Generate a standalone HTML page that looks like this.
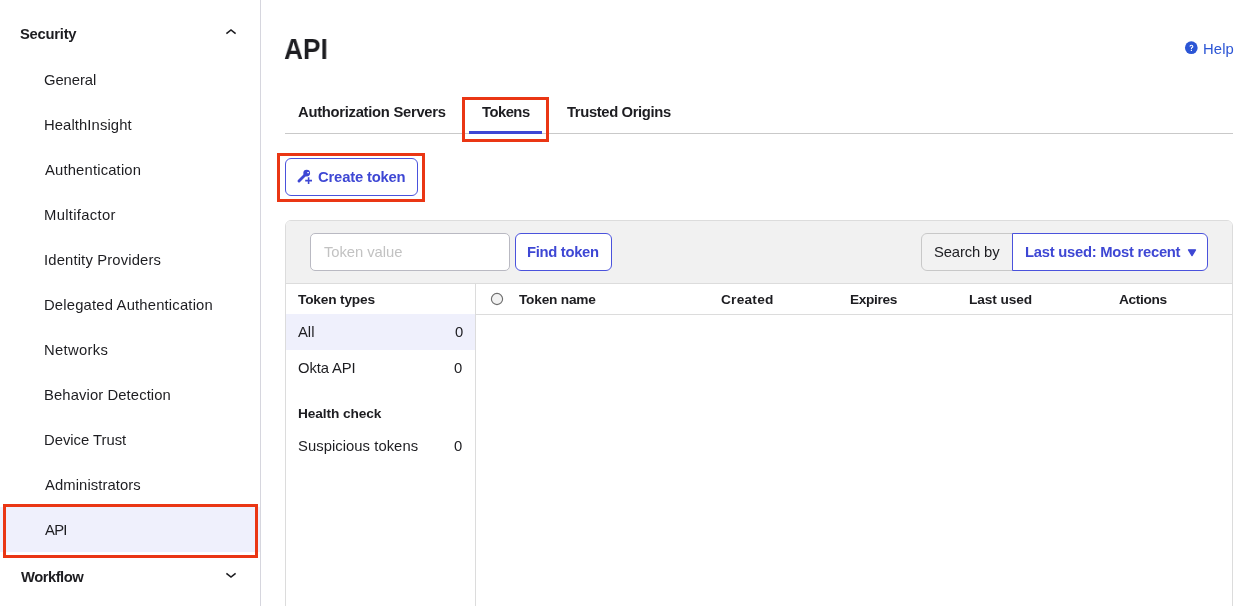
<!DOCTYPE html>
<html><head><meta charset="utf-8">
<style>
*{box-sizing:border-box;margin:0;padding:0}
html,body{width:1257px;height:606px;overflow:hidden;background:#fff;font-family:"Liberation Sans",sans-serif;color:#1d1d21}
.a{position:absolute;white-space:nowrap;line-height:1}
body>div.a{will-change:transform}
</style></head><body>
<div class="a" style="left:260px;top:0;width:1px;height:606px;background:#d6d6de"></div>
<svg class="a" style="left:224px;top:27px" width="14" height="9" viewBox="0 0 14 9"><path d="M2.4 6.7 L7 3.0 L11.6 6.7" fill="none" stroke="#1d1d21" stroke-width="1.6"/></svg>
<div class="a" style="left:0;top:507px;width:260px;height:45px;background:#eff0fc"></div>
<div class="a" style="left:3px;top:504px;width:255px;height:54px;border:3px solid #ea3614"></div>
<svg class="a" style="left:224px;top:570px" width="14" height="9" viewBox="0 0 14 9"><path d="M2.4 3.3 L7 7.0 L11.6 3.3" fill="none" stroke="#1d1d21" stroke-width="1.6"/></svg>

<svg class="a" style="left:1184px;top:41px" width="15" height="14" viewBox="0 0 15 14"><circle cx="7.3" cy="6.7" r="6.35" fill="#2b55d5"/><path d="M6.0 5.5 Q6.0 4.2 7.4 4.2 Q8.8 4.2 8.8 5.4 Q8.8 6.2 8.1 6.6 Q7.4 7.0 7.4 7.9" fill="none" stroke="#fff" stroke-width="1.15"/><rect x="6.8" y="8.8" width="1.2" height="1.2" fill="#fff"/></svg>

<div class="a" style="left:285px;top:133px;width:948px;height:1px;background:#c9c9c9"></div>
<div class="a" style="left:469px;top:131px;width:73px;height:3px;background:#3e47d4"></div>
<div class="a" style="left:462px;top:97px;width:87px;height:45px;border:3px solid #ea3614"></div>

<div class="a" style="left:285px;top:158px;width:133px;height:38px;border:1px solid #4a52dc;border-radius:6px"></div>
<svg class="a" style="left:293px;top:165px" width="25" height="25" viewBox="0 0 25 25">
 <circle cx="13.7" cy="8.1" r="3.4" fill="#3e47d4"/>
 <path d="M12 10 L6 16" stroke="#3e47d4" stroke-width="2.9" stroke-linecap="round"/>
 <rect x="14.2" y="7.1" width="1.8" height="1.1" fill="#fff"/>
 <path d="M12.2 15.6 H19 M15.6 12.2 V19" stroke="#3e47d4" stroke-width="1.6"/>
</svg>
<div class="a" style="left:277px;top:153px;width:148px;height:49px;border:3px solid #ea3614"></div>

<div class="a" style="left:285px;top:220px;width:948px;height:400px;border:1px solid #dcdcdc;border-radius:6px;overflow:hidden">
  <div class="a" style="left:0;top:0;width:946px;height:63px;background:#f1f1f1;border-bottom:1px solid #dcdcdc"></div>
  <div class="a" style="left:189px;top:63px;width:1px;height:400px;background:#dcdcdc"></div>
  <div class="a" style="left:190px;top:93px;width:760px;height:1px;background:#dcdcdc"></div>
  <div class="a" style="left:0;top:93px;width:189px;height:36px;background:#eff0fc"></div>
</div>
<div class="a" style="left:310px;top:233px;width:200px;height:38px;background:#fff;border:1px solid #b9b9c2;border-radius:5px"></div>
<div class="a" style="left:515px;top:233px;width:97px;height:38px;background:#fff;border:1px solid #4a52dc;border-radius:6px"></div>
<div class="a" style="left:921px;top:233px;width:93px;height:38px;background:#f2f2f2;border:1px solid #c8c8c8;border-radius:6px 0 0 6px"></div>
<div class="a" style="left:1012px;top:233px;width:196px;height:38px;background:#fff;border:1px solid #4a52dc;border-radius:0 6px 6px 0"></div>
<svg class="a" style="left:1187px;top:248px" width="10" height="9" viewBox="0 0 10 9"><path d="M1.5 1.8 H8.5 L5 7.6 Z" fill="#3e47d4" stroke="#3e47d4" stroke-width="1.3" stroke-linejoin="round"/></svg>
<svg class="a" style="left:490px;top:292px" width="14" height="14" viewBox="0 0 14 14"><circle cx="7" cy="7" r="5.6" fill="#f2f2f2" stroke="#6f6f6f" stroke-width="1.15"/></svg>

<div id="t0" class="a" style="left:19.50px;top:27.00px;font-size:14.8px;font-weight:700;letter-spacing:-0.257px;color:#1d1d21">Security<span style="display:inline-block;width:0;height:0"></span></div>
<div id="t1" class="a" style="left:43.50px;top:72.91px;font-size:14.8px;font-weight:400;letter-spacing:-0.067px;color:#1d1d21">General<span style="display:inline-block;width:0;height:0"></span></div>
<div id="t2" class="a" style="left:43.50px;top:117.91px;font-size:14.8px;font-weight:400;letter-spacing:0.100px;color:#1d1d21">HealthInsight<span style="display:inline-block;width:0;height:0"></span></div>
<div id="t3" class="a" style="left:44.50px;top:162.91px;font-size:14.8px;font-weight:400;letter-spacing:0.169px;color:#1d1d21">Authentication<span style="display:inline-block;width:0;height:0"></span></div>
<div id="t4" class="a" style="left:43.50px;top:207.91px;font-size:14.8px;font-weight:400;letter-spacing:0.320px;color:#1d1d21">Multifactor<span style="display:inline-block;width:0;height:0"></span></div>
<div id="t5" class="a" style="left:43.50px;top:252.91px;font-size:14.8px;font-weight:400;letter-spacing:0.153px;color:#1d1d21">Identity Providers<span style="display:inline-block;width:0;height:0"></span></div>
<div id="t6" class="a" style="left:43.50px;top:297.91px;font-size:14.8px;font-weight:400;letter-spacing:0.183px;color:#1d1d21">Delegated Authentication<span style="display:inline-block;width:0;height:0"></span></div>
<div id="t7" class="a" style="left:43.50px;top:342.91px;font-size:14.8px;font-weight:400;letter-spacing:0.314px;color:#1d1d21">Networks<span style="display:inline-block;width:0;height:0"></span></div>
<div id="t8" class="a" style="left:43.50px;top:387.91px;font-size:14.8px;font-weight:400;letter-spacing:0.106px;color:#1d1d21">Behavior Detection<span style="display:inline-block;width:0;height:0"></span></div>
<div id="t9" class="a" style="left:43.50px;top:432.91px;font-size:14.8px;font-weight:400;letter-spacing:0.000px;color:#1d1d21">Device Trust<span style="display:inline-block;width:0;height:0"></span></div>
<div id="t10" class="a" style="left:44.50px;top:477.91px;font-size:14.8px;font-weight:400;letter-spacing:0.092px;color:#1d1d21">Administrators<span style="display:inline-block;width:0;height:0"></span></div>
<div id="t11" class="a" style="left:44.50px;top:522.91px;font-size:14.8px;font-weight:400;letter-spacing:-0.700px;color:#1d1d21">API<span style="display:inline-block;width:0;height:0"></span></div>
<div id="t12" class="a" style="left:21.00px;top:569.91px;font-size:14.8px;font-weight:700;letter-spacing:-0.514px;color:#1d1d21">Workflow<span style="display:inline-block;width:0;height:0"></span></div>
<div id="t13" class="a" style="left:283.50px;top:34.91px;font-size:29.2px;font-weight:700;letter-spacing:0.000px;color:#1d1d21;transform:scaleX(0.9023);transform-origin:0 0">API<span style="display:inline-block;width:0;height:0"></span></div>
<div id="t14" class="a" style="left:1202.50px;top:41.82px;font-size:14.8px;font-weight:400;letter-spacing:0.133px;color:#2b55d5">Help<span style="display:inline-block;width:0;height:0"></span></div>
<div id="t15" class="a" style="left:297.50px;top:104.91px;font-size:14.8px;font-weight:700;letter-spacing:-0.290px;color:#1d1d21">Authorization Servers<span style="display:inline-block;width:0;height:0"></span></div>
<div id="t16" class="a" style="left:482.00px;top:105.00px;font-size:14.8px;font-weight:700;letter-spacing:-0.520px;color:#1d1d21">Tokens<span style="display:inline-block;width:0;height:0"></span></div>
<div id="t17" class="a" style="left:567.00px;top:105.00px;font-size:14.8px;font-weight:700;letter-spacing:-0.371px;color:#1d1d21">Trusted Origins<span style="display:inline-block;width:0;height:0"></span></div>
<div id="t18" class="a" style="left:318.00px;top:169.50px;font-size:14.8px;font-weight:700;letter-spacing:-0.182px;color:#3e47d4">Create token<span style="display:inline-block;width:0;height:0"></span></div>
<div id="t19" class="a" style="left:324.00px;top:245.10px;font-size:14.8px;font-weight:400;letter-spacing:-0.060px;color:#c2c2c2">Token value<span style="display:inline-block;width:0;height:0"></span></div>
<div id="t20" class="a" style="left:527.00px;top:245.00px;font-size:14.8px;font-weight:700;letter-spacing:-0.311px;color:#3e47d4">Find token<span style="display:inline-block;width:0;height:0"></span></div>
<div id="t21" class="a" style="left:933.50px;top:245.00px;font-size:14.8px;font-weight:400;letter-spacing:-0.125px;color:#1d1d21">Search by<span style="display:inline-block;width:0;height:0"></span></div>
<div id="t22" class="a" style="left:1024.50px;top:245.00px;font-size:14.8px;font-weight:700;letter-spacing:-0.267px;color:#3e47d4">Last used: Most recent<span style="display:inline-block;width:0;height:0"></span></div>
<div id="t23" class="a" style="left:298.00px;top:293.31px;font-size:13.7px;font-weight:700;letter-spacing:-0.180px;color:#1d1d21">Token types<span style="display:inline-block;width:0;height:0"></span></div>
<div id="t24" class="a" style="left:519.00px;top:293.31px;font-size:13.7px;font-weight:700;letter-spacing:-0.222px;color:#1d1d21">Token name<span style="display:inline-block;width:0;height:0"></span></div>
<div id="t25" class="a" style="left:721.00px;top:293.31px;font-size:13.7px;font-weight:700;letter-spacing:0.233px;color:#1d1d21">Created<span style="display:inline-block;width:0;height:0"></span></div>
<div id="t26" class="a" style="left:849.50px;top:293.31px;font-size:13.7px;font-weight:700;letter-spacing:-0.333px;color:#1d1d21">Expires<span style="display:inline-block;width:0;height:0"></span></div>
<div id="t27" class="a" style="left:969.00px;top:293.31px;font-size:13.7px;font-weight:700;letter-spacing:-0.100px;color:#1d1d21">Last used<span style="display:inline-block;width:0;height:0"></span></div>
<div id="t28" class="a" style="left:1119.00px;top:293.31px;font-size:13.7px;font-weight:700;letter-spacing:-0.367px;color:#1d1d21">Actions<span style="display:inline-block;width:0;height:0"></span></div>
<div id="t29" class="a" style="left:298.00px;top:325.32px;font-size:14.8px;font-weight:400;letter-spacing:0.000px;color:#1d1d21">All<span style="display:inline-block;width:0;height:0"></span></div>
<div id="t30" class="a" style="left:455.00px;top:325.32px;font-size:14.8px;font-weight:400;letter-spacing:0.000px;color:#1d1d21">0<span style="display:inline-block;width:0;height:0"></span></div>
<div id="t31" class="a" style="left:297.50px;top:361.21px;font-size:14.8px;font-weight:400;letter-spacing:-0.114px;color:#1d1d21">Okta API<span style="display:inline-block;width:0;height:0"></span></div>
<div id="t32" class="a" style="left:454.00px;top:361.21px;font-size:14.8px;font-weight:400;letter-spacing:0.000px;color:#1d1d21">0<span style="display:inline-block;width:0;height:0"></span></div>
<div id="t33" class="a" style="left:297.50px;top:407.31px;font-size:13.7px;font-weight:700;letter-spacing:-0.091px;color:#1d1d21">Health check<span style="display:inline-block;width:0;height:0"></span></div>
<div id="t34" class="a" style="left:297.50px;top:439.00px;font-size:14.8px;font-weight:400;letter-spacing:0.050px;color:#1d1d21">Suspicious tokens<span style="display:inline-block;width:0;height:0"></span></div>
<div id="t35" class="a" style="left:454.00px;top:439.00px;font-size:14.8px;font-weight:400;letter-spacing:0.000px;color:#1d1d21">0<span style="display:inline-block;width:0;height:0"></span></div>
</body></html>
